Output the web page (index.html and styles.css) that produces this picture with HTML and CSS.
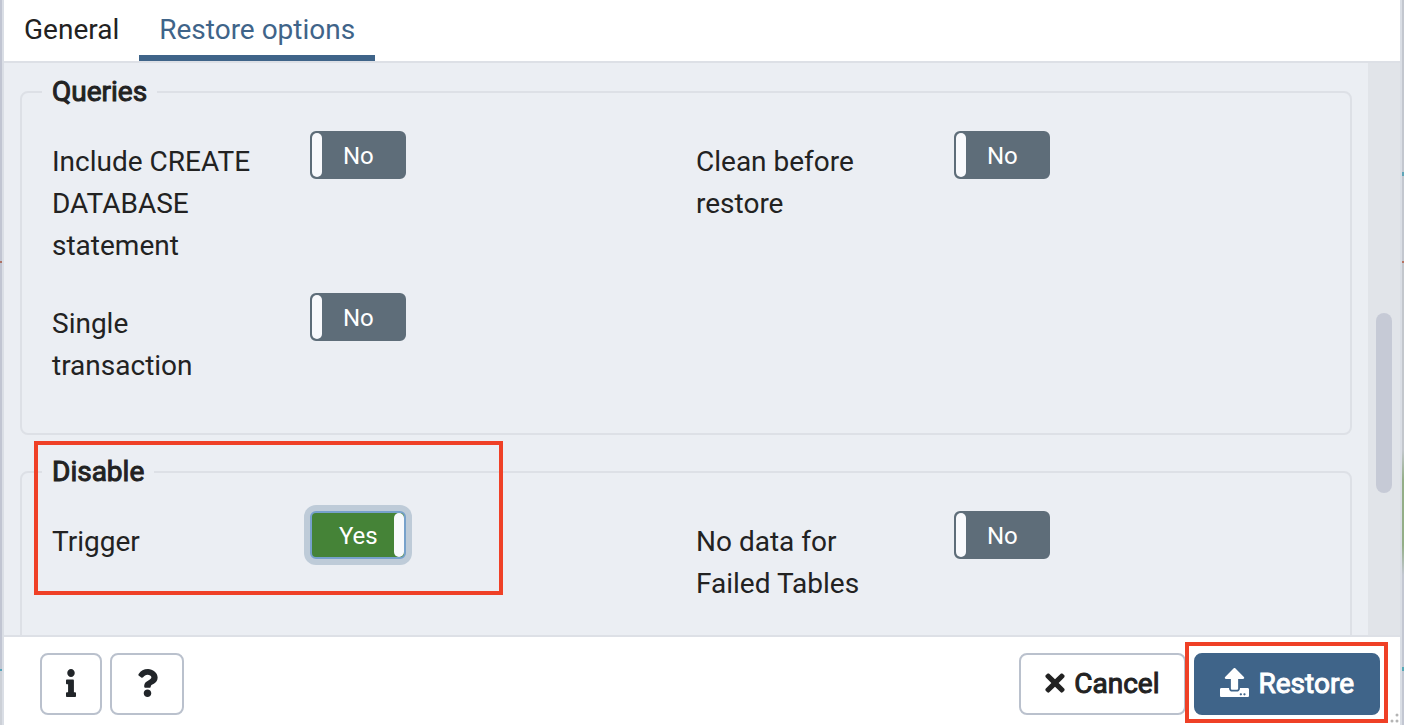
FILE: index.html
```html
<!DOCTYPE html>
<html lang="en">
<head>
<meta charset="utf-8">
<title>Restore</title>
<link rel="stylesheet" href="styles.css">
</head>
<body>
<div class="backdrop">
<div class="edge edge-left"></div>
<main class="dialog">
  <nav class="tabs" role="tablist">
    <button class="tab" role="tab" aria-selected="false">General</button>
    <button class="tab tab-active" role="tab" aria-selected="true">Restore options</button>
  </nav>
  <div class="content">
    <form class="options">
      <fieldset class="group">
        <legend>Queries</legend>
        <div class="fields">
          <div class="field">
            <label for="create-db">Include CREATE DATABASE statement</label>
            <div class="switch"><input type="checkbox" role="switch" id="create-db"><span class="state">No</span></div>
          </div>
          <div class="field">
            <label for="clean">Clean before restore</label>
            <div class="switch"><input type="checkbox" role="switch" id="clean"><span class="state">No</span></div>
          </div>
          <div class="field">
            <label for="single">Single transaction</label>
            <div class="switch"><input type="checkbox" role="switch" id="single"><span class="state">No</span></div>
          </div>
        </div>
      </fieldset>
      <fieldset class="group">
        <legend>Disable</legend>
        <div class="fields">
          <div class="field">
            <label for="trigger">Trigger</label>
            <div class="switch switch-on"><input type="checkbox" role="switch" id="trigger" checked><span class="state">Yes</span></div>
          </div>
          <div class="field">
            <label for="no-data">No data for Failed Tables</label>
            <div class="switch"><input type="checkbox" role="switch" id="no-data"><span class="state">No</span></div>
          </div>
        </div>
        <div class="mark mark-trigger"></div>
      </fieldset>
    </form>
    <div class="scrollbar"><div class="thumb"></div></div>
  </div>
  <footer class="footer">
    <button class="btn btn-info" aria-label="Information">
      <svg width="12" height="28" viewBox="0 0 192 512" preserveAspectRatio="none" fill="currentColor"><path d="M20 424.229h20V279.771H20c-11.046 0-20-8.954-20-20V212c0-11.046 8.954-20 20-20h112c11.046 0 20 8.954 20 20v212.229h20c11.046 0 20 8.954 20 20V492c0 11.046-8.954 20-20 20H20c-11.046 0-20-8.954-20-20v-47.771c0-11.046 8.954-20 20-20zM96 0C56.235 0 24 32.235 24 72s32.235 72 72 72 72-32.235 72-72S135.764 0 96 0z"/></svg>
    </button>
    <button class="btn btn-help" aria-label="Help">
      <svg width="21" height="28" viewBox="0 0 384 512" fill="currentColor"><path d="M202.021 0C122.202 0 70.503 32.703 29.914 91.026c-7.363 10.58-5.093 25.086 5.178 32.874l43.138 32.709c10.373 7.865 25.132 6.026 33.253-4.148 25.049-31.381 43.63-49.449 82.757-49.449 30.764 0 68.816 19.799 68.816 49.631 0 22.552-18.617 34.134-48.993 51.164-35.423 19.86-82.299 44.576-82.299 106.405V320c0 13.255 10.745 24 24 24h72.471c13.255 0 24-10.745 24-24v-5.773c0-42.86 125.268-44.645 125.268-160.627C377.504 66.256 286.902 0 202.021 0zM192 373.459c-38.196 0-69.271 31.075-69.271 69.271 0 38.195 31.075 69.27 69.271 69.27s69.271-31.075 69.271-69.271-31.075-69.27-69.271-69.27z"/></svg>
    </button>
    <div class="actions">
      <button class="btn btn-cancel">
        <svg width="20" height="28" viewBox="0 0 352 512" fill="currentColor"><path d="M242.72 256l100.07-100.07c12.28-12.28 12.28-32.19 0-44.48l-22.24-22.24c-12.28-12.28-32.19-12.28-44.48 0L176 189.28 75.93 89.21c-12.28-12.28-32.19-12.28-44.48 0L9.21 111.45c-12.28 12.28-12.28 32.19 0 44.48L109.28 256 9.21 356.07c-12.28 12.28-12.28 32.19 0 44.48l22.24 22.24c12.28 12.28 32.2 12.28 44.48 0L176 322.72l100.07 100.07c12.28 12.28 32.2 12.28 44.48 0l22.24-22.24c12.28-12.28 12.28-32.19 0-44.48L242.72 256z"/></svg>
        Cancel
      </button>
      <div class="primary">
        <button class="btn btn-restore">
          <svg width="29" height="29" viewBox="0 0 512 512" fill="currentColor"><path d="M296 384h-80c-13.300 0-24-10.700-24-24V192h-87.700c-17.800 0-26.700-21.500-14.100-34.100L242.300 5.700c7.500-7.500 19.800-7.500 27.300 0l152.200 152.200c12.600 12.600 3.700 34.100-14.100 34.100H320v168c0 13.300-10.700 24-24 24zm216-8v112c0 13.300-10.700 24-24 24H24c-13.300 0-24-10.700-24-24V376c0-13.300 10.700-24 24-24h136v8c0 30.900 25.100 56 56 56h80c30.900 0 56-25.100 56-56v-8h136c13.300 0 24 10.700 24 24zm-124 88c0-11-9-20-20-20s-20 9-20 20 9 20 20 20 20-9 20-20zm64 0c0-11-9-20-20-20s-20 9-20 20 9 20 20 20 20-9 20-20z"/></svg>
          Restore
        </button>
        <div class="mark mark-restore"></div>
      </div>
    </div>
    <svg class="grip" width="16" height="16" viewBox="0 0 16 16" fill="#b4b4b4"><circle cx="13" cy="3" r="1.500"/><circle cx="8" cy="9" r="1.500"/><circle cx="13" cy="9" r="1.500"/><circle cx="3" cy="15" r="1.500"/><circle cx="8" cy="15" r="1.500"/><circle cx="13" cy="15" r="1.500"/></svg>
  </footer>
</main>
<div class="edge edge-right"></div>
</div>
</body>
</html>
```
FILE: styles.css
```css
* { box-sizing: border-box; }
body {
  margin: 0;
  font: 28px/42px Roboto, sans-serif;
  color: #222;
}
button { font: inherit; color: inherit; cursor: pointer; }

.backdrop { display: flex; height: 100vh; overflow: hidden; }
.edge { flex: none; width: 2px; }
.edge-left {
  background: linear-gradient(#c1c5d2 261px, #ad7265 261px 263px, #c1c5d2 263px 669px, #58a6bc 669px 671px, #ccd0d7 671px);
}
.edge-right {
  background: linear-gradient(#c3c7cf 172px, #60a6b8 172px 176px, #c3c7cf 176px 261px, #b77465 261px 263px, #c3c7cd 263px 450px, #93ae87 480px 545px, #c3c7d2 575px 667px, #55a9b7 667px 671px, #c3c7d2 671px);
}
.dialog {
  flex: 1;
  display: flex;
  flex-direction: column;
  min-width: 0;
  border: solid #dadee5;
  border-width: 0 2px;
  background: #fff;
}

.tabs { flex: none; display: flex; border-bottom: 2px solid #dde0e6; }
.tab {
  padding: 9px 20px 4px;
  border: 0;
  border-bottom: 6px solid transparent;
  background: none;
}
.tab-active { color: #3f6489; border-color: #3f6489; }

.content {
  flex: 1;
  display: flex;
  min-height: 0;
  overflow: hidden;
  background: #ebeef3;
  border-bottom: 2px solid #dde0e6;
}
.options { flex: 1; min-width: 0; padding: 8px 16px; }
.group {
  position: relative;
  min-width: 0;
  margin: 0 0 16px;
  padding: 18px 20px 20px;
  border: 2px solid #dde0e6;
  border-radius: 8px;
}
.group legend {
  padding: 0 10px;
  -webkit-text-stroke: 1px #222;
}
.fields { display: grid; grid-template-columns: 1fr 1fr; }
.field {
  display: grid;
  grid-template-columns: 5fr 7fr;
  align-items: start;
  margin-bottom: 26px;
}
.field label { padding: 10px 52px 0 10px; }

.switch {
  position: relative;
  display: grid;
  width: 96px;
  height: 48px;
  border: 2px solid #5e6d79;
  border-radius: 6px;
  background: #5e6d79;
  color: #fff;
  font-size: 24px;
}
.switch input {
  grid-area: 1 / 1;
  appearance: none;
  width: 10px;
  height: 44px;
  margin: 0;
  border-radius: 5px;
  background: #f8f9fc;
}
.state { grid-area: 1 / 1; place-self: center; height: 40px; }
.switch-on {
  border-color: #77a1cb;
  background: #458337;
  box-shadow: 0 0 0 6px #becbd8;
}
.switch-on input { justify-self: end; }

.scrollbar { flex: none; width: 32px; padding: 250px 8px 0; background: #e1e4e9; }
.thumb { height: 180px; border-radius: 8px; background: #c6cad6; }

.footer {
  position: relative;
  flex: none;
  display: flex;
  gap: 8px;
  padding: 16px 20px 10px 36px;
}
.actions { display: flex; gap: 8px; margin-left: auto; }
.btn {
  display: flex;
  align-items: center;
  justify-content: center;
  gap: 9px;
  height: 62px;
  padding: 0 24px;
  border: 2px solid #bac1cd;
  border-radius: 8px;
  background: #fff;
  color: #222;
  -webkit-text-stroke: 1px currentColor;
}
.btn svg { margin-bottom: 3px; }
.btn-info { width: 62px; color: #212529; }
.btn-help { width: 74px; color: #212529; }
.primary { position: relative; }
.btn-restore { gap: 10px; border-color: #3f6489; background: #3f6489; color: #fff; }

.mark { position: absolute; border: 4px solid #ef4026; pointer-events: none; }
.mark-trigger { left: 12px; top: -52px; width: 469px; height: 154px; }
.mark-restore { inset: -11px -8px -8px -9px; }
.grip { position: absolute; right: 0; bottom: -3px; }
```
